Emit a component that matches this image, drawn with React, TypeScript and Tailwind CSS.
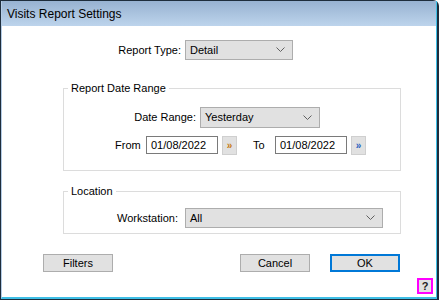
import React from "react";

const font = { fontFamily: '"Liberation Sans", Arial, sans-serif' };

function Chevron() {
  return (
    <svg width="9" height="6" viewBox="0 0 9 6" className="shrink-0">
      <path d="M0.5 0.5 L4.5 4.5 L8.5 0.5" fill="none" stroke="#606060" strokeWidth="1" />
    </svg>
  );
}

function Select({ value, className }: { value: string; className: string }) {
  return (
    <div
      className={`flex items-center justify-between border border-[#adadad] bg-[#e1e1e1] pl-[4px] pr-[7px] text-[11px] text-[#000] ${className}`}
    >
      <span>{value}</span>
      <Chevron />
    </div>
  );
}

function DateField({ value, arrowColor }: { value: string; arrowColor: string }) {
  return (
    <div className="flex items-start gap-[4px]">
      <div className="flex h-[18px] w-[72px] items-center border border-[#7a7a7a] bg-white pl-[4px] text-[11px]">
        {value}
      </div>
      <div
        className={`flex h-[19px] w-[15px] items-center justify-center border border-[#cfcfcf] bg-[#e1e1e1] text-[10px] font-bold leading-none ${arrowColor}`}
      >
        »
      </div>
    </div>
  );
}

function Button({ label, primary }: { label: string; primary?: boolean }) {
  return (
    <div
      className={`flex h-[18px] w-[70px] items-center justify-center bg-[#e1e1e1] text-[11px] ${
        primary ? "border-2 border-[#0078d7]" : "border border-[#adadad]"
      }`}
    >
      {label}
    </div>
  );
}

export default function App() {
  return (
    <div className="h-[300px] w-[439px] bg-white" style={font}>
      {/* window frame */}
      <div className="flex h-[300px] w-[439px] flex-col rounded-tr-[6px] border-b border-l border-r-2 border-t border-[#1e2d3c]">
        <div className="flex flex-1 flex-col border-b-2 border-l border-r border-[#b4cce6] border-b-[#3fbfe6] border-r-[#3fbfe6]">
          {/* title bar */}
          <div className="flex h-[25px] items-center bg-gradient-to-b from-[#97b2d1] to-[#bdd4ec] pl-[5px] text-[12px] text-black">
            Visits Report Settings
          </div>

          {/* client area */}
          <div className="flex flex-1 flex-col bg-white text-[11px] text-black">
            <div className="mt-[14px] flex items-center">
              <div className="w-[183px] pr-[4px] text-right">Report Type:</div>
              <Select value="Detail" className="h-[20px] w-[108px]" />
            </div>

            <fieldset className="ml-[61px] mt-[21px] h-[90px] w-[338px] border border-[#dcdcdc]">
              <legend className="ml-[4px] px-[3px] leading-[15px]">Report Date Range</legend>
              <div className="mt-[11px] flex items-center">
                <div className="w-[136px] pr-[4px] text-right">Date Range:</div>
                <Select value="Yesterday" className="h-[21px] w-[120px]" />
              </div>
              <div className="mt-[8px] flex items-start">
                <div className="ml-[51px] w-[31px] pt-[1px]">From</div>
                <DateField value="01/08/2022" arrowColor="text-[#c77a10]" />
                <div className="ml-[16px] w-[22px] pt-[1px]">To</div>
                <DateField value="01/08/2022" arrowColor="text-[#2a62c0]" />
              </div>
            </fieldset>

            <fieldset className="ml-[61px] mt-[13px] h-[50px] w-[338px] border border-[#dcdcdc]">
              <legend className="ml-[4px] px-[3px] leading-[15px]">Location</legend>
              <div className="mt-[9px] flex items-center">
                <div className="w-[114px] text-right">Workstation:</div>
                <Select value="All" className="ml-[7px] h-[20px] w-[198px]" />
              </div>
            </fieldset>

            <div className="mt-[20px] flex">
              <div className="ml-[41px]">
                <Button label="Filters" />
              </div>
              <div className="ml-[127px]">
                <Button label="Cancel" />
              </div>
              <div className="ml-[20px]">
                <Button label="OK" primary />
              </div>
            </div>

            <div className="mt-[6px] flex justify-end pr-[3px]">
              <div className="flex h-[16px] w-[16px] items-center justify-center border-2 border-[#ff00ff] bg-[#e1e1e1] text-[11px] font-bold text-[#222]">
                ?
              </div>
            </div>
          </div>
        </div>
      </div>
    </div>
  );
}
